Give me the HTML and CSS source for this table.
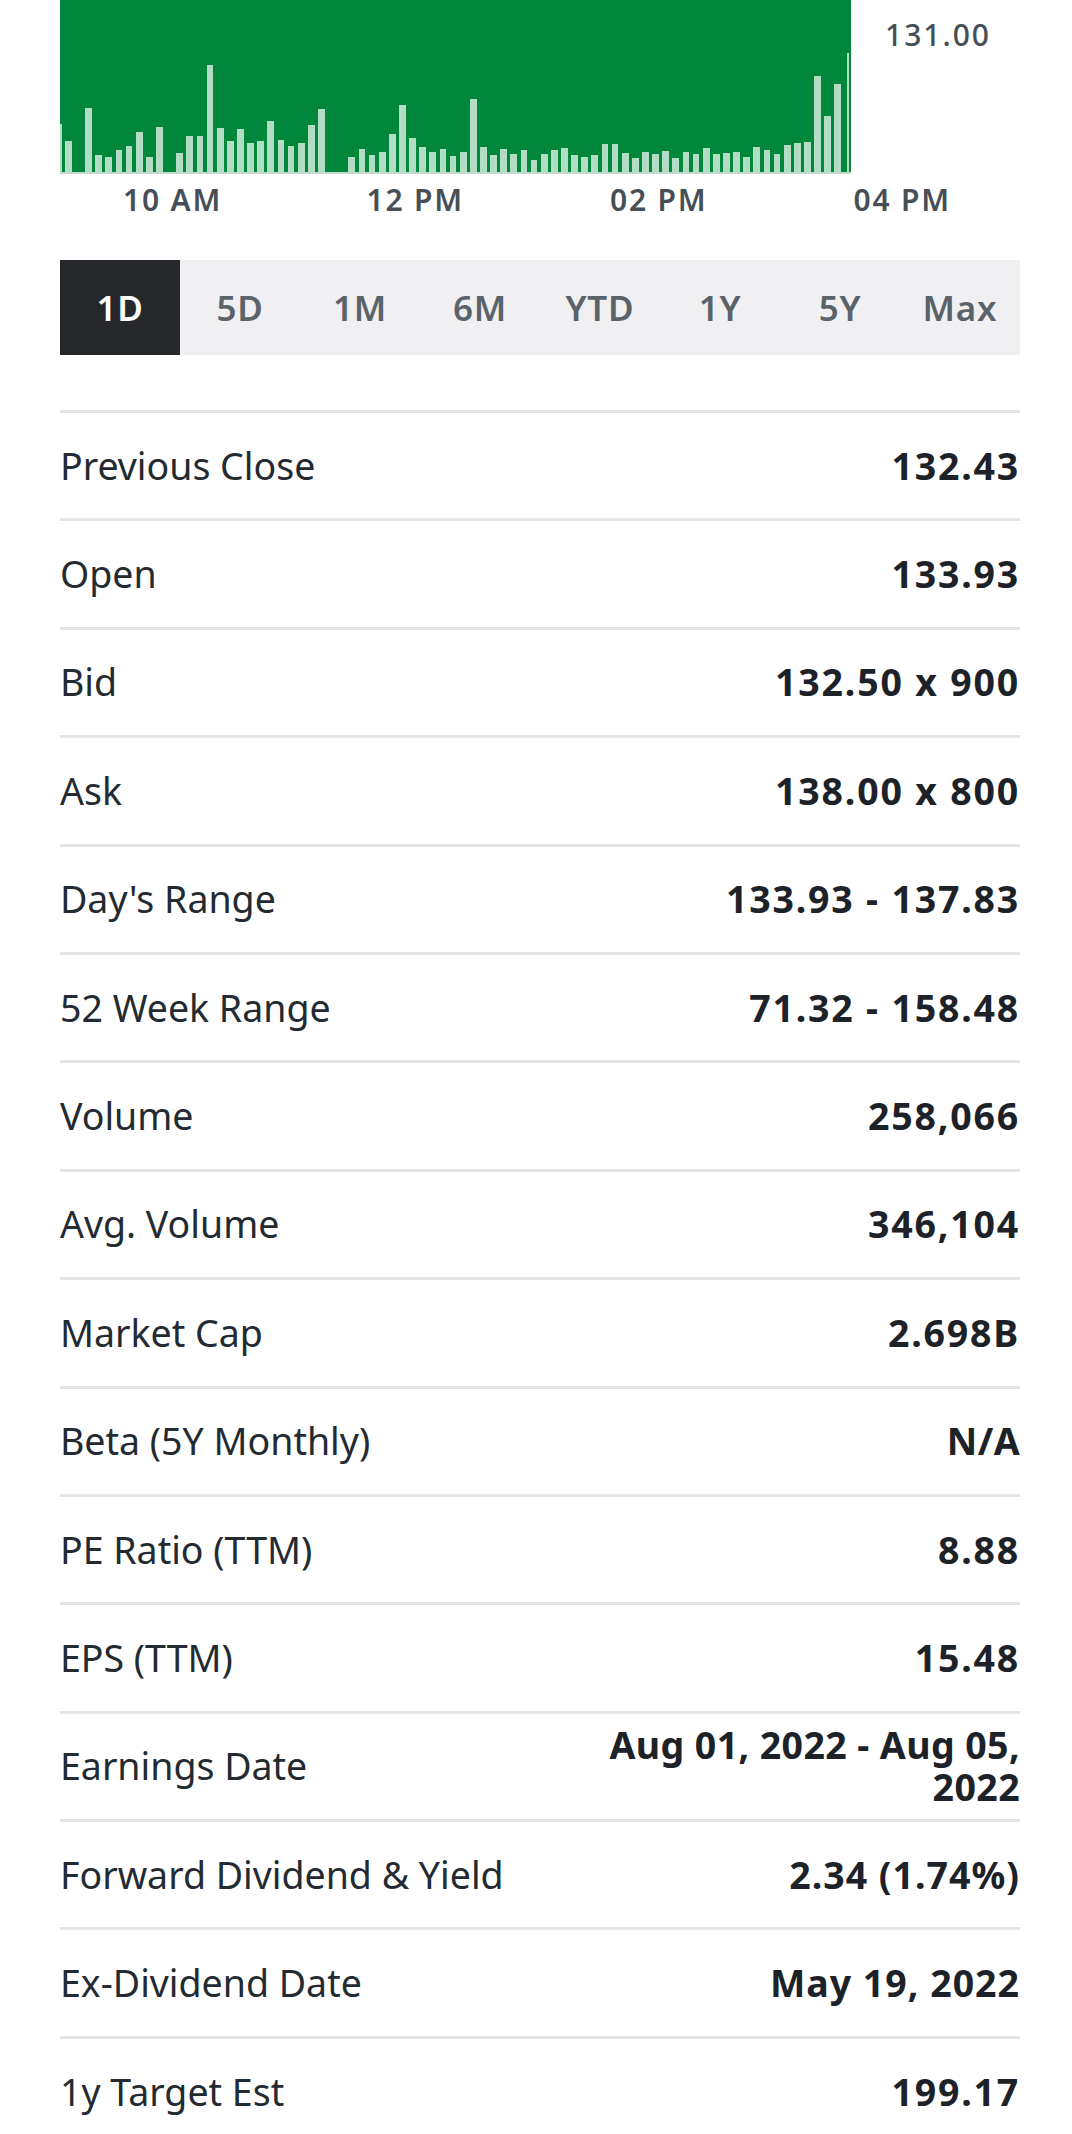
FILE: index.html
```html
<!DOCTYPE html>
<html lang="en">
<head>
<meta charset="utf-8">
<title>Quote summary</title>
<link rel="stylesheet" href="styles.css">
</head>
<body>
<main class="page">
  <section class="chart">
    <div class="chart-top">
      <div class="plot">
        <div class="bars">
          <i class="bar" style="height:48px"></i><i class="bar" style="height:31px"></i><i class="bar" style="height:0px"></i><i class="bar" style="height:64px"></i><i class="bar" style="height:17px"></i><i class="bar" style="height:15px"></i><i class="bar" style="height:22px"></i><i class="bar" style="height:26px"></i><i class="bar" style="height:40px"></i><i class="bar" style="height:15px"></i><i class="bar" style="height:45px"></i><i class="bar" style="height:0px"></i><i class="bar" style="height:19px"></i><i class="bar" style="height:36px"></i><i class="bar" style="height:36px"></i><i class="bar" style="height:107px"></i><i class="bar" style="height:44px"></i><i class="bar" style="height:31px"></i><i class="bar" style="height:43px"></i><i class="bar" style="height:29px"></i><i class="bar" style="height:31px"></i><i class="bar" style="height:51px"></i><i class="bar" style="height:32px"></i><i class="bar" style="height:26px"></i><i class="bar" style="height:29px"></i><i class="bar" style="height:47px"></i><i class="bar" style="height:63px"></i><i class="bar" style="height:0px"></i><i class="bar" style="height:0px"></i><i class="bar" style="height:15px"></i><i class="bar" style="height:23px"></i><i class="bar" style="height:17px"></i><i class="bar" style="height:20px"></i><i class="bar" style="height:38px"></i><i class="bar" style="height:67px"></i><i class="bar" style="height:34px"></i><i class="bar" style="height:25px"></i><i class="bar" style="height:20px"></i><i class="bar" style="height:23px"></i><i class="bar" style="height:16px"></i><i class="bar" style="height:20px"></i><i class="bar" style="height:73px"></i><i class="bar" style="height:25px"></i><i class="bar" style="height:17px"></i><i class="bar" style="height:23px"></i><i class="bar" style="height:18px"></i><i class="bar" style="height:22px"></i><i class="bar" style="height:12px"></i><i class="bar" style="height:18px"></i><i class="bar" style="height:22px"></i><i class="bar" style="height:24px"></i><i class="bar" style="height:17px"></i><i class="bar" style="height:15px"></i><i class="bar" style="height:17px"></i><i class="bar" style="height:28px"></i><i class="bar" style="height:28px"></i><i class="bar" style="height:19px"></i><i class="bar" style="height:14px"></i><i class="bar" style="height:20px"></i><i class="bar" style="height:18px"></i><i class="bar" style="height:21px"></i><i class="bar" style="height:14px"></i><i class="bar" style="height:20px"></i><i class="bar" style="height:18px"></i><i class="bar" style="height:24px"></i><i class="bar" style="height:18px"></i><i class="bar" style="height:19px"></i><i class="bar" style="height:20px"></i><i class="bar" style="height:15px"></i><i class="bar" style="height:25px"></i><i class="bar" style="height:22px"></i><i class="bar" style="height:18px"></i><i class="bar" style="height:27px"></i><i class="bar" style="height:29px"></i><i class="bar" style="height:30px"></i><i class="bar" style="height:96px"></i><i class="bar" style="height:56px"></i><i class="bar" style="height:88px"></i><i class="bar edge" style="height:119px"></i>
        </div>
      </div>
      <div class="y-axis">
        <span class="y-label">131.00</span>
      </div>
    </div>
    <div class="x-axis">
      <span class="x-label">10 AM</span>
      <span class="x-label">12 PM</span>
      <span class="x-label">02 PM</span>
      <span class="x-label">04 PM</span>
    </div>
  </section>

  <nav class="ranges">
    <button class="range active">1D</button>
    <button class="range">5D</button>
    <button class="range">1M</button>
    <button class="range">6M</button>
    <button class="range">YTD</button>
    <button class="range">1Y</button>
    <button class="range">5Y</button>
    <button class="range">Max</button>
  </nav>

  <table class="stats">
    <tbody>
      <tr><td class="label">Previous Close</td><td class="value">132.43</td></tr>
      <tr><td class="label">Open</td><td class="value">133.93</td></tr>
      <tr><td class="label">Bid</td><td class="value">132.50 x 900</td></tr>
      <tr><td class="label">Ask</td><td class="value">138.00 x 800</td></tr>
      <tr><td class="label">Day's Range</td><td class="value">133.93 - 137.83</td></tr>
      <tr><td class="label">52 Week Range</td><td class="value">71.32 - 158.48</td></tr>
      <tr><td class="label">Volume</td><td class="value">258,066</td></tr>
      <tr><td class="label">Avg. Volume</td><td class="value">346,104</td></tr>
      <tr><td class="label">Market Cap</td><td class="value">2.698B</td></tr>
      <tr><td class="label">Beta (5Y Monthly)</td><td class="value text">N/A</td></tr>
      <tr><td class="label">PE Ratio (TTM)</td><td class="value">8.88</td></tr>
      <tr><td class="label">EPS (TTM)</td><td class="value">15.48</td></tr>
      <tr><td class="label">Earnings Date</td><td class="value text">Aug 01, 2022 - Aug 05, 2022</td></tr>
      <tr><td class="label">Forward Dividend &amp; Yield</td><td class="value mixed">2.34 (1.74%)</td></tr>
      <tr><td class="label">Ex-Dividend Date</td><td class="value mixed">May 19, 2022</td></tr>
      <tr><td class="label">1y Target Est</td><td class="value">199.17</td></tr>
    </tbody>
  </table>
</main>
</body>
</html>
```

FILE: styles.css
```css
html, body {
  margin: 0;
  padding: 0;
  background: #ffffff;
}

body {
  font-family: "Noto Sans", "Open Sans", "Liberation Sans", sans-serif;
  color: #232a31;
}

.page {
  width: 960px;
  padding-left: 60px;
}

/* ---------- chart ---------- */
.chart-top {
  display: flex;
}

.plot {
  width: 791px;
  height: 172px;
  background: #00873c;
  border-bottom: 2px solid #c6d8cc;
  overflow: hidden;
  position: relative;
}

.bars {
  display: flex;
  align-items: flex-end;
  gap: 3.45px;
  height: 100%;
  margin-left: -5.15px;
}

.bar {
  flex: none;
  width: 6.7px;
  background: #b3dcc4;
}

.bar.edge {
  width: 2px;
  margin-left: 2px;
}

.y-axis {
  flex: 1;
  padding-left: 34px;
  padding-top: 20px;
}

.y-label {
  display: block;
  font-size: 30px;
  line-height: 30px;
  font-weight: 500;
  letter-spacing: 2px;
  color: #464e56;
}

.x-axis {
  display: grid;
  grid-template-columns: repeat(4, 243.5px);
  margin-top: 11px;
  padding-left: 63px;
}

.x-label {
  font-size: 30px;
  line-height: 30px;
  font-weight: 600;
  letter-spacing: 1.8px;
  color: #464e56;
}

/* ---------- range tabs ---------- */
.ranges {
  display: grid;
  grid-template-columns: repeat(8, 1fr);
  margin-top: 45px;
  height: 95px;
  background: #f0f0f3;
}

.range {
  border: 0;
  margin: 0;
  padding: 0;
  background: transparent;
  font-family: inherit;
  font-size: 35px;
  font-weight: 600;
  letter-spacing: 0.8px;
  color: #5b636a;
  display: flex;
  align-items: center;
  justify-content: center;
}

.range.active {
  background: #25272a;
  color: #ffffff;
}

/* ---------- stats table ---------- */
.stats {
  width: 100%;
  margin-top: 55px;
  border-collapse: collapse;
}

.stats tr {
  border-top: 3px solid #e2e4e7;
  height: 108.4px;
}

.stats td {
  padding: 0;
  vertical-align: middle;
}

.label {
  font-size: 37.5px;
  line-height: 42px;
  color: #232a31;
  white-space: nowrap;
}

.value {
  font-size: 37.5px;
  line-height: 42px;
  font-weight: 700;
  letter-spacing: 1.8px;
  color: #1d2228;
  text-align: right;
  width: 50%;
}

.value.mixed {
  letter-spacing: 1px;
}

.value.text {
  letter-spacing: 0.4px;
}
```
